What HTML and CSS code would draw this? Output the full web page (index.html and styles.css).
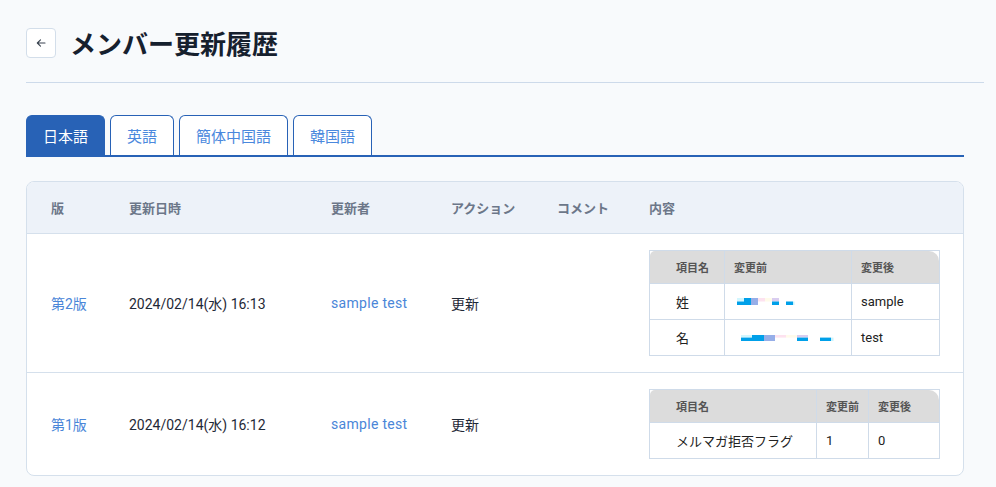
FILE: index.html
```html
<!DOCTYPE html>
<html lang="ja">
<head>
<meta charset="UTF-8">
<meta name="viewport" content="width=device-width, initial-scale=1.0">
<title>メンバー更新履歴</title>
<link rel="stylesheet" href="styles.css">
</head>
<body>
    <div class="page">
        <div class="title-row">
            <button class="back-btn" type="button">
                <svg width="12" height="12" viewBox="0 0 12 12"><path d="M10 6H2.5M5.5 2.8L2.3 6l3.2 3.2" fill="none" stroke="#3a4350" stroke-width="1.1" stroke-linecap="round" stroke-linejoin="round"/></svg>
            </button>
            <h1>メンバー更新履歴</h1>
        </div>

        <div class="content">
            <div class="tabs">
                <div class="tab active">日本語</div>
                <div class="tab">英語</div>
                <div class="tab">簡体中国語</div>
                <div class="tab">韓国語</div>
            </div>

            <div class="card">
                <table class="history">
                    <colgroup>
                        <col style="width:102px">
                        <col style="width:202px">
                        <col style="width:120px">
                        <col style="width:106px">
                        <col style="width:92px">
                        <col>
                    </colgroup>
                    <thead>
                        <tr>
                            <th>版</th>
                            <th>更新日時</th>
                            <th>更新者</th>
                            <th>アクション</th>
                            <th>コメント</th>
                            <th>内容</th>
                        </tr>
                    </thead>
                    <tbody>
                        <tr>
                            <td><a class="link">第2版</a></td>
                            <td>2024/02/14(水) 16:13</td>
                            <td><a class="link user">sample test</a></td>
                            <td>更新</td>
                            <td></td>
                            <td class="detail">
                                <table class="diff diff-name">
                                    <tr><th>項目名</th><th>変更前</th><th>変更後</th></tr>
                                    <tr>
                                        <td>姓</td>
                                        <td>
                                            <svg class="masked m1" width="60" height="8" viewBox="0 0 60 8">
                                                <rect x="0" y="0" width="7" height="3.5" fill="#d2f6fe"/>
                                                <rect x="0" y="3.5" width="7" height="3.5" fill="#00a0e9"/>
                                                <rect x="7" y="0" width="7" height="7" fill="#00a0e9"/>
                                                <rect x="14" y="0" width="7" height="7" fill="#96aee8"/>
                                                <rect x="21" y="0" width="7" height="3.5" fill="#fde2ef"/>
                                                <rect x="28" y="0" width="7" height="3.5" fill="#fffbea"/>
                                                <rect x="35" y="0" width="7" height="3.5" fill="#d9cdf0"/>
                                                <rect x="35" y="3.5" width="7" height="3.5" fill="#00a0e9"/>
                                                <rect x="49" y="3.5" width="7" height="3.5" fill="#00a0e9"/>
                                                <rect x="56" y="3.5" width="1.5" height="3.5" fill="#c9f3fd"/>
                                            </svg>
                                        </td>
                                        <td>sample</td>
                                    </tr>
                                    <tr>
                                        <td>名</td>
                                        <td>
                                            <svg class="masked m2" width="94" height="6" viewBox="0 0 94 6">
                                                <rect x="0" y="0" width="11" height="2.6" fill="#d2f6fe"/>
                                                <rect x="0" y="2.6" width="11" height="3.4" fill="#00a0e9"/>
                                                <rect x="11" y="0" width="12" height="6" fill="#00a0e9"/>
                                                <rect x="23" y="0" width="11" height="6" fill="#96aee8"/>
                                                <rect x="34" y="0" width="11" height="2.6" fill="#fde2ef"/>
                                                <rect x="45" y="0" width="11" height="2.6" fill="#fffbea"/>
                                                <rect x="56" y="0" width="11" height="2.6" fill="#d9cdf0"/>
                                                <rect x="56" y="2.6" width="11" height="3.4" fill="#00a0e9"/>
                                                <rect x="79" y="2.6" width="11" height="3.4" fill="#00a0e9"/>
                                                <rect x="90" y="2.6" width="2.5" height="3.4" fill="#c9f3fd"/>
                                            </svg>
                                        </td>
                                        <td>test</td>
                                    </tr>
                                </table>
                            </td>
                        </tr>
                        <tr>
                            <td><a class="link">第1版</a></td>
                            <td>2024/02/14(水) 16:12</td>
                            <td><a class="link user">sample test</a></td>
                            <td>更新</td>
                            <td></td>
                            <td class="detail">
                                <table class="diff diff-flag">
                                    <tr><th>項目名</th><th>変更前</th><th>変更後</th></tr>
                                    <tr>
                                        <td>メルマガ拒否フラグ</td>
                                        <td>1</td>
                                        <td>0</td>
                                    </tr>
                                </table>
                            </td>
                        </tr>
                    </tbody>
                </table>
            </div>
        </div>
    </div>
</body>
</html>
```

FILE: styles.css
```css
body {
    margin: 0;
    padding: 0;
    background-color: #f8fafc;
    font-family: Roboto, "Noto Sans CJK JP", sans-serif;
    color: #1f2937;
}
.page {
    padding: 28px 12px 0 26px;
}
.title-row {
    display: flex;
    align-items: center;
    gap: 14px;
    padding-bottom: 24px;
    border-bottom: 1px solid #cddaea;
}
.back-btn {
    width: 30px;
    height: 30px;
    padding: 0;
    display: flex;
    align-items: center;
    justify-content: center;
    background-color: #ffffff;
    border: 1px solid #d3deea;
    border-radius: 4px;
}
.title-row h1 {
    margin: 0;
    font-family: "Noto Sans CJK JP", sans-serif;
    font-size: 26px;
    font-weight: 700;
    line-height: 30px;
    color: #16202e;
}
.content {
    margin-right: 20px;
}
.tabs {
    display: flex;
    gap: 5px;
    margin-top: 32px;
    border-bottom: 2px solid #2862b6;
}
.tab {
    height: 39px;
    padding: 0 16px;
    display: flex;
    align-items: center;
    font-family: "Noto Sans CJK JP", sans-serif;
    font-size: 15px;
    color: #4a88dd;
    background-color: #ffffff;
    border: 1px solid #2862b6;
    border-bottom: none;
    border-radius: 6px 6px 0 0;
}
.tab.active {
    color: #ffffff;
    background-color: #2862b6;
}
.card {
    margin-top: 24px;
    background-color: #ffffff;
    border: 1px solid #d5e0ec;
    border-radius: 8px;
    overflow: hidden;
}
.history {
    width: 100%;
    border-collapse: collapse;
    table-layout: fixed;
}
.history > thead th {
    height: 51px;
    padding: 0;
    text-align: left;
    font-family: "Noto Sans CJK JP", sans-serif;
    font-size: 13px;
    font-weight: 700;
    color: #6c7789;
    background-color: #edf2f9;
    border-bottom: 1px solid #d5e0ec;
}
.history > tbody > tr > td {
    padding: 16px 0;
    font-size: 14px;
    color: #1f2937;
    vertical-align: middle;
    border-bottom: 1px solid #d5e0ec;
}
.history > tbody > tr:last-child > td {
    border-bottom: none;
}
.history > thead th:first-child,
.history > tbody > tr > td:first-child {
    padding-left: 24px;
}
.history > tbody > tr > td.detail {
    padding-right: 23px;
}
.link {
    color: #4a86d8;
    cursor: pointer;
}
.user {
    letter-spacing: 0.3px;
}

.diff {
    width: 100%;
    border-collapse: separate;
    border-spacing: 0;
    border: 1px solid #cfdbe9;
    table-layout: fixed;
}
.diff th {
    height: 32px;
    padding: 0 0 0 9px;
    text-align: left;
    font-family: "Noto Sans CJK JP", sans-serif;
    font-size: 11px;
    font-weight: 700;
    color: #555555;
    background-color: #dcdcdc;
}
.diff th:first-child {
    border-top-left-radius: 5px;
}
.diff th:last-child {
    border-top-right-radius: 10px;
}
.diff td {
    height: 35px;
    padding: 0 0 0 9px;
    font-size: 13px;
    color: #222222;
    border-top: 1px solid #cfdbe9;
}
.diff th + th,
.diff td + td {
    border-left: 1px solid #cfdbe9;
}
.diff th:first-child,
.diff td:first-child {
    padding-left: 26px;
    width: 48px;
}
.diff-name td:nth-child(2), .diff-name th:nth-child(2) {
    width: 117px;
}
.diff-flag th:first-child, .diff-flag td:first-child {
    width: 140px;
}
.diff-flag td:nth-child(2), .diff-flag th:nth-child(2) {
    width: 42px;
}
.masked {
    display: block;
}
.m1 {
    margin-left: 3px;
}
.m2 {
    margin-left: 7px;
}
```
